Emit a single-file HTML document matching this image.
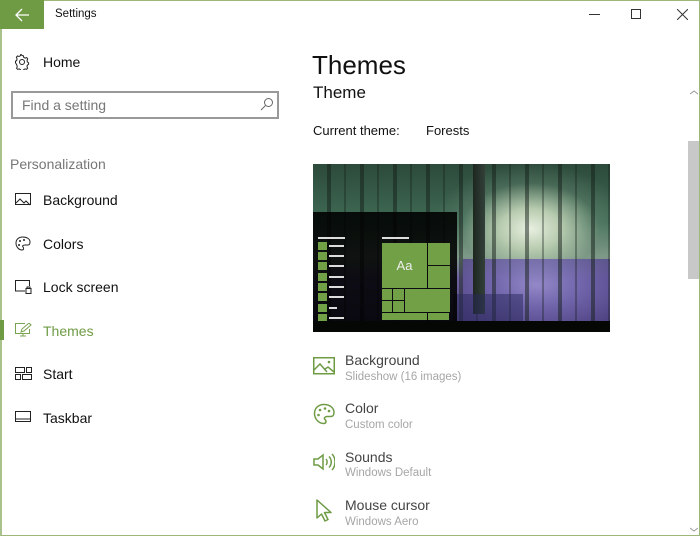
<!DOCTYPE html>
<html><head><meta charset="utf-8"><style>
*{margin:0;padding:0;box-sizing:border-box}
body{width:700px;height:536px;background:#fff;font-family:"Segoe UI","Liberation Sans",sans-serif;position:relative;overflow:hidden;color:#000}
.a{position:absolute}
.frame{left:0;top:0;width:700px;height:536px;border:1px solid #9db77a;border-left:2px solid #a9c18a}
.nav{font-size:14px;color:#111}
.sub{font-size:11.5px;color:#a6a6a6}
.it{font-size:14px;color:#444}
.g{background:#72a046}
.ln{background:#ddd;height:2px}
</style></head><body>
<div class="a frame"></div>
<div class="a" style="left:0;top:0;width:44px;height:29px;background:#6f9b45"></div>
<svg class="a" style="left:14px;top:8px" width="16" height="14"><path d="M15 7H2M8 1L2 7l6 6" stroke="#fff" stroke-width="1.3" fill="none"/></svg>
<div class="a" style="left:55px;top:8px;font-size:11.5px;color:#111">Settings</div>
<div class="a" style="left:589px;top:14px;width:11px;height:1px;background:#333"></div>
<div class="a" style="left:631px;top:9px;width:10px;height:10px;border:1px solid #333"></div>
<svg class="a" style="left:677px;top:9px" width="11" height="11"><path d="M0 0L11 11M11 0L0 11" stroke="#333" stroke-width="1"/></svg>

<svg class="a" style="left:14px;top:54px" width="16" height="16" viewBox="0 0 16 16"><circle cx="8" cy="8" r="2.5" fill="none" stroke="#222"/><path d="M8 1.5l1.3.2.4 1.6 1.4.8 1.6-.5 1 1.2-.6 1.5.2 1.6 1.3 1v1.4l-1.3.9-.3 1.6.6 1.5-1 1-1.6-.4-1.4.8-.4 1.6H7l-.4-1.6-1.4-.8-1.6.4-1-1 .6-1.5-.3-1.6L1.5 8.7V7.3l1.3-1 .2-1.6-.6-1.5 1-1.2 1.6.5 1.4-.8.4-1.6z" fill="none" stroke="#222" stroke-width="1"/></svg>
<div class="a nav" style="left:43px;top:54px">Home</div>
<div class="a" style="left:11px;top:91px;width:268px;height:28px;border:2px solid #999"></div>
<div class="a" style="left:22px;top:97px;font-size:14px;color:#777">Find a setting</div>
<svg class="a" style="left:260px;top:97px" width="14" height="14"><circle cx="8.5" cy="5.5" r="4" fill="none" stroke="#666"/><path d="M5.5 8.5L1 13" stroke="#666"/></svg>
<div class="a" style="left:10px;top:156px;font-size:14px;color:#777">Personalization</div>

<svg class="a" style="left:15px;top:193px" width="17" height="13"><rect x=".5" y=".5" width="15" height="11" fill="none" stroke="#222"/><path d="M1 10l4-4 4 4 2-2 4 4" fill="none" stroke="#222"/></svg>
<div class="a nav" style="left:43px;top:192px">Background</div>
<svg class="a" style="left:15px;top:236px" width="16" height="15"><path d="M8 1C3 1 1 4 1 7c0 4 3 7 6 7 2 0 2-2 1-3s0-2 2-2h3c2 0 2-2 2-3C15 3 12 1 8 1z" fill="none" stroke="#222"/><circle cx="5" cy="5" r="1" fill="#222"/><circle cx="9" cy="4" r="1" fill="#222"/><circle cx="4" cy="9" r="1" fill="#222"/></svg>
<div class="a nav" style="left:43px;top:236px">Colors</div>
<svg class="a" style="left:15px;top:280px" width="17" height="14"><path d="M10 11H.5V.5h14V6" fill="none" stroke="#222"/><rect x="11" y="8.5" width="5" height="5" fill="none" stroke="#222"/><path d="M12 8.5V7h3v1.5" fill="none" stroke="#222"/></svg>
<div class="a nav" style="left:43px;top:279px">Lock screen</div>
<div class="a" style="left:0;top:320px;width:4px;height:20px;background:#6f9b45"></div>
<svg class="a" style="left:15px;top:323px" width="17" height="14"><path d="M10 .5H.5v10h14V6M5 13h6M8 11v2" fill="none" stroke="#7aa352"/><path d="M6 9l1-3 7-6 2 2-7 6z" fill="none" stroke="#7aa352"/></svg>
<div class="a nav" style="left:43px;top:323px;color:#6f9b45">Themes</div>
<svg class="a" style="left:15px;top:367px" width="17" height="13"><rect x=".5" y=".5" width="9" height="5" fill="none" stroke="#222"/><rect x="11.5" y=".5" width="5" height="5" fill="none" stroke="#222"/><rect x=".5" y="7.5" width="5" height="5" fill="none" stroke="#222"/><rect x="7.5" y="7.5" width="9" height="5" fill="none" stroke="#222"/></svg>
<div class="a nav" style="left:43px;top:366px">Start</div>
<svg class="a" style="left:15px;top:411px" width="17" height="12"><rect x=".5" y=".5" width="15" height="10" fill="none" stroke="#222"/><path d="M1 8h15" stroke="#222"/></svg>
<div class="a nav" style="left:43px;top:410px">Taskbar</div>

<div class="a" style="left:312px;top:50px;font-size:26px;font-weight:300;color:#111">Themes</div>
<div class="a" style="left:313px;top:83px;font-size:17px;color:#111">Theme</div>
<div class="a" style="left:313px;top:123px;font-size:13px;color:#111">Current theme:</div>
<div class="a" style="left:426px;top:123px;font-size:13px;color:#111">Forests</div>

<div class="a" style="left:313px;top:164px;width:297px;height:168px;overflow:hidden;background:linear-gradient(180deg,#2d4a3a 0%,#3f6b55 35%,#7f9a88 55%,#6f62a0 68%,#4d3f7e 100%)">
 <div class="a" style="left:120px;top:0;width:177px;height:130px;background:radial-gradient(ellipse at 55% 50%,#e8efe0 0%,#b8ccb0 22%,rgba(120,150,130,.3) 50%,transparent 72%)"></div>
 <div class="a" style="left:150px;top:95px;width:147px;height:65px;background:radial-gradient(ellipse at 50% 40%,#9a8ed0 0%,#7468b0 40%,#4a3d7c 100%);opacity:.85"></div>
 <div class="a" style="left:0;top:0;width:297px;height:168px;background:repeating-linear-gradient(90deg,transparent 0 14px,rgba(20,30,25,.5) 14px 18px,transparent 18px 31px,rgba(20,30,25,.35) 31px 33px)"></div>
 <div class="a" style="left:160px;top:0;width:12px;height:150px;background:linear-gradient(90deg,#1d2720,#33403a)"></div>
 <div class="a" style="left:140px;top:130px;width:70px;height:30px;background:rgba(40,40,90,.5)"></div>
 <div class="a" style="left:0;top:48px;width:144px;height:110px;background:rgba(0,0,0,.88)"></div>
 <div class="a" style="left:0;top:157px;width:297px;height:11px;background:#050705"></div>
 <div class="a ln" style="left:5px;top:73px;width:27px"></div>
 <div class="a ln" style="left:69px;top:73px;width:27px"></div>
</div>
<div class="a" style="left:318px;top:242px">
 <div class="a g" style="left:0;top:0;width:9px;height:8px"></div><div class="a ln" style="left:11px;top:3px;width:15px"></div>
 <div class="a g" style="left:0;top:10px;width:9px;height:8px"></div><div class="a ln" style="left:11px;top:13px;width:15px"></div>
 <div class="a g" style="left:0;top:20px;width:9px;height:8px"></div><div class="a ln" style="left:11px;top:23px;width:15px"></div>
 <div class="a g" style="left:0;top:31px;width:9px;height:8px"></div><div class="a ln" style="left:11px;top:34px;width:15px"></div>
 <div class="a g" style="left:0;top:41px;width:9px;height:8px"></div><div class="a ln" style="left:11px;top:44px;width:15px"></div>
 <div class="a g" style="left:0;top:51px;width:9px;height:8px"></div><div class="a ln" style="left:11px;top:54px;width:15px"></div>
 <div class="a g" style="left:0;top:62px;width:9px;height:8px"></div><div class="a ln" style="left:11px;top:65px;width:8px"></div>
 <div class="a g" style="left:0;top:72px;width:9px;height:7px"></div><div class="a ln" style="left:11px;top:75px;width:15px"></div>
</div>
<div class="a g" style="left:382px;top:243px;width:45px;height:45px;color:#eee;font-size:13px;text-align:center;line-height:45px">Aa</div>
<div class="a g" style="left:428px;top:243px;width:22px;height:22px"></div>
<div class="a g" style="left:428px;top:266px;width:22px;height:22px"></div>
<div class="a g" style="left:382px;top:289px;width:10px;height:11px"></div>
<div class="a g" style="left:393px;top:289px;width:11px;height:11px"></div>
<div class="a g" style="left:382px;top:301px;width:10px;height:11px"></div>
<div class="a g" style="left:393px;top:301px;width:11px;height:11px"></div>
<div class="a g" style="left:405px;top:289px;width:45px;height:23px"></div>
<div class="a g" style="left:382px;top:313px;width:45px;height:7px"></div>
<div class="a g" style="left:428px;top:313px;width:21px;height:7px"></div>

<svg class="a" style="left:313px;top:357px" width="22" height="18"><rect x=".75" y=".75" width="20.5" height="16" fill="none" stroke="#6f9b45" stroke-width="1.5"/><path d="M1 13l6-6 7 8M12 12l3-2 6 5" fill="none" stroke="#6f9b45" stroke-width="1.5"/><circle cx="16" cy="5" r="1.3" fill="#6f9b45"/></svg>
<div class="a it" style="left:345px;top:352px">Background</div>
<div class="a sub" style="left:345px;top:371px">Slideshow (16 images)</div>
<svg class="a" style="left:313px;top:403px" width="22" height="22"><path d="M11 1.5C5 1.5 1.5 5.5 1.5 10.5c0 6 5 10 9 10 3 0 3-2.5 1.5-4s0-3 2.5-3h3.5c2.5 0 3-2.5 3-4C21 5 17 1.5 11 1.5z" fill="none" stroke="#6f9b45" stroke-width="1.5"/><circle cx="7" cy="7" r="1.3" fill="#6f9b45"/><circle cx="12" cy="5.5" r="1.3" fill="#6f9b45"/><circle cx="16" cy="8" r="1.3" fill="#6f9b45"/><circle cx="5.5" cy="12" r="1.3" fill="#6f9b45"/></svg>
<div class="a it" style="left:345px;top:400px">Color</div>
<div class="a sub" style="left:345px;top:419px">Custom color</div>
<svg class="a" style="left:313px;top:452px" width="22" height="20"><path d="M1 7h4l5-4v14l-5-4H1z" fill="none" stroke="#6f9b45" stroke-width="1.5"/><path d="M13 7c1.5 1.5 1.5 4.5 0 6M16 4.5c3 3 3 8 0 11M19 2c4 4 4 12 0 16" fill="none" stroke="#6f9b45" stroke-width="1.5"/></svg>
<div class="a it" style="left:345px;top:449px">Sounds</div>
<div class="a sub" style="left:345px;top:467px">Windows Default</div>
<svg class="a" style="left:316px;top:499px" width="18" height="24"><path d="M1 1v18l4.5-4 3.5 7 3-1.5-3.5-7H15z" fill="none" stroke="#6f9b45" stroke-width="1.5" stroke-linejoin="round"/></svg>
<div class="a it" style="left:345px;top:497px">Mouse cursor</div>
<div class="a sub" style="left:345px;top:516px">Windows Aero</div>

<svg class="a" style="left:690px;top:90px" width="8" height="5"><path d="M0 4l4-3 4 3" fill="none" stroke="#999"/></svg>
<div class="a" style="left:688px;top:141px;width:11px;height:138px;background:#c8c8c8"></div>
<svg class="a" style="left:690px;top:527px" width="8" height="5"><path d="M0 1l4 3 4-3" fill="none" stroke="#999"/></svg>
</body></html>
